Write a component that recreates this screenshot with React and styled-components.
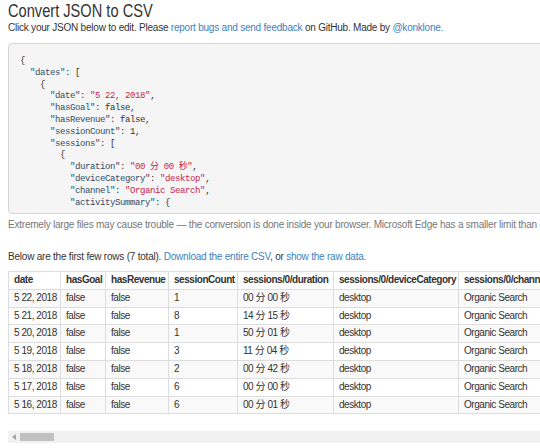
import React from 'react';
import styled, { createGlobalStyle } from 'styled-components';

const GlobalStyle = createGlobalStyle`
  html, body {
    margin: 0;
    padding: 0;
    background: #fff;
    overflow: hidden;
  }
  body {
    font-family: "Liberation Sans", Arial, "Noto Sans CJK SC", sans-serif;
    color: #333;
  }
`;

const Page = styled.div`
  padding: 0 0 0 8px;
  width: 620px;
`;

const Title = styled.h1`
  margin: 0;
  font-family: "Liberation Sans", Arial, sans-serif;
  font-weight: normal;
  font-size: 19px;
  line-height: 21px;
  color: #333;
  transform: scaleX(0.77);
  transform-origin: left center;
  white-space: nowrap;
`;

const Line = styled.p`
  margin: ${p => p.$top || 0}px 0 0;
  font-size: 10px;
  line-height: 12px;
  letter-spacing: -0.22px;
  white-space: nowrap;
  color: ${p => (p.$muted ? '#777' : '#333')};
`;

const Link = styled.a`
  color: #3b7fc0;
  text-decoration: none;
`;

const CodeBox = styled.pre`
  margin: 9px 0 0;
  height: 171px;
  box-sizing: border-box;
  overflow: hidden;
  padding: 12px 11px 0;
  background: #f5f5f5;
  border: 1px solid #d6d6d6;
  border-radius: 4px;
  font-family: "Liberation Mono", "DejaVu Sans Mono", "Noto Sans CJK SC", monospace;
  font-size: 9px;
  letter-spacing: -0.4px;
  line-height: 11.8px;
  color: #333;
`;

const Key = styled.span`
  color: #2d4d69;
`;

const Str = styled.span`
  color: #c7254e;
`;

const TableScroll = styled.div`
  margin-top: 8px;
  width: 532px;
  overflow: hidden;
`;

const Table = styled.table`
  border-collapse: collapse;
  table-layout: fixed;
  font-size: 10px;
  letter-spacing: -0.45px;
  white-space: nowrap;
`;

const Th = styled.th`
  text-align: left;
  font-weight: bold;
  padding: 2px 5px;
  line-height: 12.8px;
  border: 1px solid #ddd;
  overflow: hidden;
`;

const Row = styled.tr`
  background: ${p => (p.$odd ? '#f9f9f9' : '#fff')};
`;

const Td = styled.td`
  padding: 2px 5px;
  line-height: 12.8px;
  border: 1px solid #ddd;
  overflow: hidden;
`;

const Scrollbar = styled.div`
  margin-top: 17px;
  width: 532px;
  height: 12px;
  background: #f1f1f1;
  display: flex;
  align-items: center;
`;

const Arrow = styled.div`
  width: 12px;
  display: flex;
  justify-content: center;
  svg { display: block; }
`;

const Thumb = styled.div`
  width: 34px;
  height: 8px;
  background: #c1c1c1;
`;

const key = k => <Key>"{k}"</Key>;
const str = s => <Str>"{s}"</Str>;

const columns = [
  ['date', 52],
  ['hasGoal', 45],
  ['hasRevenue', 63],
  ['sessionCount', 69],
  ['sessions/0/duration', 96],
  ['sessions/0/deviceCategory', 125],
  ['sessions/0/channel', 120],
  ['sessions/0/activitySummary', 140],
];

const rows = [
  ['5 22, 2018', '1', '00 分 00 秒'],
  ['5 21, 2018', '8', '14 分 15 秒'],
  ['5 20, 2018', '1', '50 分 01 秒'],
  ['5 19, 2018', '3', '11 分 04 秒'],
  ['5 18, 2018', '2', '00 分 42 秒'],
  ['5 17, 2018', '6', '00 分 00 秒'],
  ['5 16, 2018', '6', '00 分 01 秒'],
];

export default function App() {
  const total = columns.reduce((s, c) => s + c[1], 0);
  return (
    <>
      <GlobalStyle />
      <Page>
        <Title>Convert JSON to CSV</Title>
        <Line $top={1}>
          Click your JSON below to edit. Please <Link href="#">report bugs and send feedback</Link> on
          GitHub. Made by <Link href="#">@konklone.</Link>
        </Line>
        <CodeBox>
{`{
  `}{key('dates')}{`: [
    {
      `}{key('date')}: {str('5 22, 2018')}{`,
      `}{key('hasGoal')}{`: false,
      `}{key('hasRevenue')}{`: false,
      `}{key('sessionCount')}{`: 1,
      `}{key('sessions')}{`: [
        {
          `}{key('duration')}: {str('00 分 00 秒')}{`,
          `}{key('deviceCategory')}: {str('desktop')}{`,
          `}{key('channel')}: {str('Organic Search')}{`,
          `}{key('activitySummary')}{`: {`}
        </CodeBox>
        <Line $muted $top={5}>
          Extremely large files may cause trouble — the conversion is done inside your browser. Microsoft Edge has a smaller limit than other browsers.
        </Line>
        <Line $top={20}>
          Below are the first few rows (7 total). <Link href="#">Download the entire CSV</Link>, or{' '}
          <Link href="#">show the raw data.</Link>
        </Line>
        <TableScroll>
          <Table style={{ width: total }}>
            <colgroup>
              {columns.map(([name, w]) => (
                <col key={name} style={{ width: w }} />
              ))}
            </colgroup>
            <thead>
              <tr>
                {columns.map(([name]) => (
                  <Th key={name}>{name}</Th>
                ))}
              </tr>
            </thead>
            <tbody>
              {rows.map(([date, count, dur], i) => (
                <Row key={date} $odd={i % 2 === 0}>
                  <Td>{date}</Td>
                  <Td>false</Td>
                  <Td>false</Td>
                  <Td>{count}</Td>
                  <Td>{dur}</Td>
                  <Td>desktop</Td>
                  <Td>Organic Search</Td>
                  <Td>{'{}'}</Td>
                </Row>
              ))}
            </tbody>
          </Table>
        </TableScroll>
        <Scrollbar>
          <Arrow>
            <svg width="4" height="6" viewBox="0 0 4 6">
              <path d="M4 0 L0 3 L4 6 Z" fill="#a3a3a3" />
            </svg>
          </Arrow>
          <Thumb />
        </Scrollbar>
      </Page>
    </>
  );
}
